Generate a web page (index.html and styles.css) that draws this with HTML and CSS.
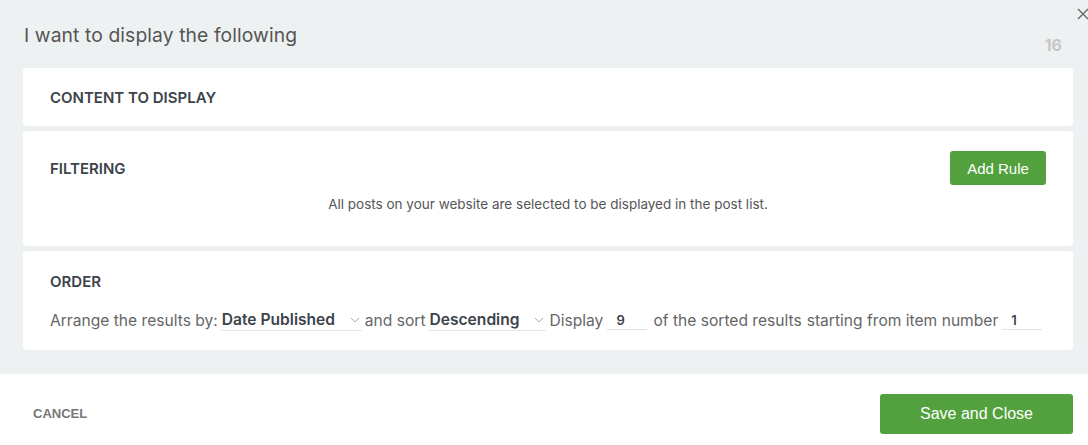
FILE: index.html
```html
<!DOCTYPE html>
<html>
<head>
<meta charset="utf-8">
<link rel="stylesheet" href="styles.css">
</head>
<body>
<div class="modal">
  <div class="main">
    <button class="close" aria-label="Close">
      <svg width="12" height="12" viewBox="0 0 12 12"><path d="M1 1L11 11M11 1L1 11" stroke="#666" stroke-width="1.4" fill="none"/></svg>
    </button>
    <div class="head">
      <h1 class="title">I want to display the following</h1>
      <span class="count">16</span>
    </div>
    <section class="card card-content">
      <h2 class="card-title">CONTENT TO DISPLAY</h2>
    </section>
    <section class="card card-filter">
      <div class="card-row">
        <h2 class="card-title">FILTERING</h2>
        <button class="btn btn-rule">Add Rule</button>
      </div>
      <p class="note">All posts on your website are selected to be displayed in the post list.</p>
    </section>
    <section class="card card-order">
      <h2 class="card-title">ORDER</h2>
      <div class="order-row">
        <span>Arrange the results by:</span>
        <span class="select sel-date"><b>Date Published</b><svg class="chev" width="10" height="6" viewBox="0 0 10 6"><path d="M1 1L5 5L9 1" stroke="#aaa" stroke-width="1" fill="none"/></svg></span>
        <span>and sort</span>
        <span class="select sel-sort"><b>Descending</b><svg class="chev" width="10" height="6" viewBox="0 0 10 6"><path d="M1 1L5 5L9 1" stroke="#aaa" stroke-width="1" fill="none"/></svg></span>
        <span>Display</span>
        <span class="num">9</span>
        <span>of the sorted results</span>
        <span class="starting">starting from item number</span>
        <span class="num">1</span>
      </div>
    </section>
  </div>
  <footer class="foot">
    <button class="cancel">CANCEL</button>
    <button class="btn btn-save">Save and Close</button>
  </footer>
</div>
</body>
</html>
```
FILE: styles.css
```css
* { box-sizing: border-box; }
html, body { margin: 0; padding: 0; }
body {
  width: 1088px;
  height: 445px;
  overflow: hidden;
  font-family: "Inter", "Noto Sans", sans-serif;
  background: #fff;
}
.modal { display: flex; flex-direction: column; height: 445px; }
.main {
  position: relative;
  background: #eef1f2;
  padding: 0 15px 23px 23px;
  height: 374px;
}
.close {
  position: absolute;
  top: 8px;
  right: -1px;
  border: 0;
  background: none;
  padding: 0;
  width: 12px;
  height: 12px;
}
.head {
  display: flex;
  justify-content: space-between;
  align-items: flex-end;
  padding: 0 11px 0 1px;
  height: 68px;
}
.title {
  margin: 0 0 21px;
  font-size: 19.3px;
  font-weight: 400;
  color: #555;
  letter-spacing: 0.1px;
}
.count {
  font-size: 16px;
  font-weight: 700;
  color: #c6c6c6;
  margin-bottom: 13px;
}
.card {
  background: #fff;
  border-radius: 3px;
  padding: 0 27px;
  margin-bottom: 5px;
}
.card-content { height: 58px; display: flex; align-items: center; }
.card-filter { height: 115px; padding-top: 20px; }
.card-order { height: 99px; padding-top: 21px; }
.card-title {
  margin: 0;
  font-size: 15px;
  font-weight: 600;
  color: #3c434a;
  letter-spacing: 0;
}
.card-row {
  display: flex;
  justify-content: space-between;
  align-items: center;
  height: 34px;
}
.note {
  margin: 11px 0 0;
  text-align: center;
  font-size: 13.5px;
  color: #555;
}
.btn {
  border: 0;
  border-radius: 3px;
  background: #52a13e;
  color: #fff;
  font-family: "Liberation Sans", Arial, sans-serif;
  cursor: pointer;
}
.btn-rule { width: 96px; height: 34px; font-size: 15px; }
.order-row {
  display: flex;
  align-items: center;
  gap: 3px;
  margin-top: 19px;
  font-size: 15.6px;
  color: #666;
  white-space: nowrap;
}
.select {
  display: inline-flex;
  align-items: center;
  justify-content: space-between;
  border-bottom: 1px solid #e6e6e6;
  padding: 0 2px 1px 1px;
  color: #3c434a;
}
.select b { font-weight: 600; }
.sel-date { width: 141px; }
.sel-sort { width: 118px; }
.chev { margin-left: 6px; }
.starting { margin-left: 2px; }
.num {
  display: inline-block;
  width: 40px;
  border-bottom: 1px solid #e0e0e0;
  padding: 0 0 1px 9px;
  margin: 0 3px 0 1px;
  color: #3c434a;
  font-weight: 600;
  font-size: 13px;
}
.foot {
  flex: 1;
  display: flex;
  justify-content: space-between;
  align-items: flex-start;
  padding: 20px 15px 0 33px;
}
.cancel {
  border: 0;
  background: none;
  padding: 0;
  margin-top: 12px;
  font-family: "Liberation Sans", Arial, sans-serif;
  font-weight: 700;
  font-size: 13px;
  color: #777;
}
.btn-save { width: 193px; height: 40px; font-size: 16px; }
```
